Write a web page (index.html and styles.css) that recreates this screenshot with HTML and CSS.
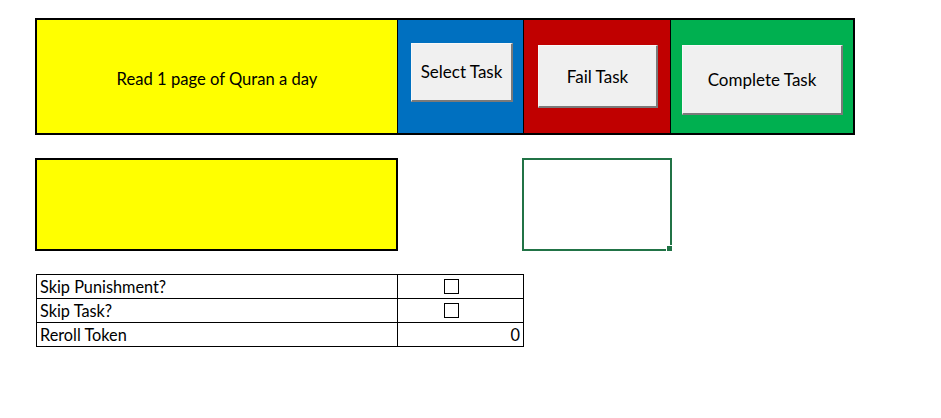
FILE: index.html
```html
<!DOCTYPE html>
<html>
<head>
<meta charset="utf-8">
<link rel="stylesheet" href="styles.css">
</head>
<body>
<div class="sheet">
  <div class="taskbar">
    <div class="cell task-name">Read 1 page of Quran a day</div>
    <div class="cell blue"><button class="btn btn-select">Select Task</button></div>
    <div class="cell red"><button class="btn btn-fail">Fail Task</button></div>
    <div class="cell green"><button class="btn btn-complete">Complete Task</button></div>
  </div>
  <div class="row2">
    <div class="yellow-box"></div>
    <div class="selection"><span class="handle"></span></div>
  </div>
  <table class="options">
    <tr><td class="label">Skip Punishment?</td><td class="val box"><span class="check"></span></td></tr>
    <tr><td class="label">Skip Task?</td><td class="val box"><span class="check"></span></td></tr>
    <tr><td class="label">Reroll Token</td><td class="val right">0</td></tr>
  </table>
</div>
</body>
</html>
```
FILE: styles.css
```css
html, body {
  margin: 0;
  padding: 0;
  background: #ffffff;
}
body {
  font-family: Lato, "Open Sans", sans-serif;
  color: #000;
  width: 941px;
  height: 418px;
  overflow: hidden;
}
.sheet {
  padding: 18px 0 0 35px;
}
.taskbar {
  display: flex;
  width: 820px;
  height: 117px;
  border: 2px solid #000;
  box-sizing: border-box;
}
.cell {
  box-sizing: border-box;
  height: 100%;
  display: flex;
  align-items: flex-start;
}
.task-name {
  width: 360px;
  background: #ffff00;
  align-items: center;
  justify-content: center;
  font-size: 16.6px;
  padding-top: 4px;
}
.blue {
  width: 126px;
  background: #0070c0;
  border-left: 1px solid #000;
  padding: 23px 0 0 13px;
}
.red {
  width: 147px;
  background: #c00000;
  border-left: 1px solid #000;
  padding: 25px 0 0 14px;
}
.green {
  width: 183px;
  background: #00b050;
  border-left: 1px solid #000;
  padding: 25px 0 0 11px;
}
.btn {
  font-family: Lato, "Open Sans", sans-serif;
  font-size: 17px;
  color: #000;
  background: #f0f0f0;
  border-style: solid;
  border-width: 1px 2px 2px 1px;
  border-color: #f8f8f8 #7a7a7a #7a7a7a #f8f8f8;
  box-sizing: border-box;
  padding: 0;
  margin: 0;
}
.btn-select {
  width: 102px;
  height: 59px;
  padding-bottom: 2px;
}
.btn-fail {
  width: 120px;
  height: 63px;
}
.btn-complete {
  width: 161px;
  height: 70px;
}
.row2 {
  display: flex;
  margin-top: 23px;
  height: 93px;
}
.yellow-box {
  width: 363px;
  height: 93px;
  box-sizing: border-box;
  background: #ffff00;
  border: 2px solid #000;
}
.selection {
  position: relative;
  margin-left: 124px;
  width: 150px;
  height: 93px;
  box-sizing: border-box;
  border: 2px solid #217346;
}
.handle {
  position: absolute;
  right: -3px;
  bottom: -3px;
  width: 5px;
  height: 5px;
  background: #217346;
  border: 1px solid #fff;
}
.options {
  margin: 23px 0 0 1px;
  border-collapse: collapse;
  font-size: 16.3px;
}
.options td {
  border: 1px solid #000;
  height: 24px;
  padding: 0 3px;
  line-height: 22px;
  box-sizing: border-box;
}
.label {
  width: 361px;
}
.val {
  width: 126px;
}
.box {
  padding-left: 46px !important;
}
.right {
  text-align: right;
}
.check {
  display: block;
  width: 15px;
  height: 15px;
  border: 1px solid #000;
  box-sizing: border-box;
}
```
